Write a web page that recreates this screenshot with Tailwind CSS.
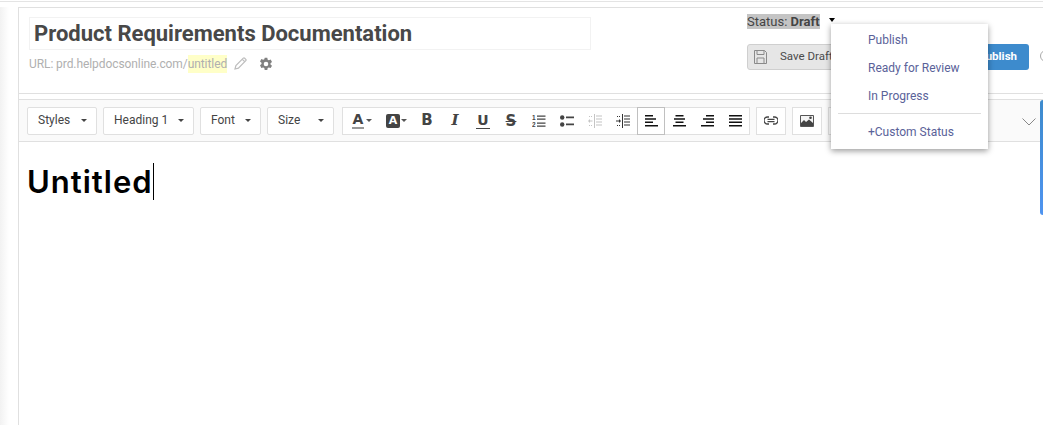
<!DOCTYPE html>
<html lang="en">
  <head>
    <meta charset="UTF-8" />
    <title>Product Requirements Documentation</title>
    <script src="https://cdn.jsdelivr.net/npm/@tailwindcss/browser@4"></script>
  </head>
  <body class="bg-white font-['Roboto',sans-serif] overflow-hidden">
    <div class="relative w-[1043px] h-[425px] overflow-hidden pt-px">
      <div class="h-[6px] border-t border-[#e4e4e4]"></div>
      <div class="flex">
        <div class="w-[18px] h-[418px] bg-gradient-to-r from-[#f2f2f2] via-white to-white"></div>
        <div class="flex-1 border-l border-[#e0e0e0] min-w-0">
          <!-- Title area -->
          <div class="h-[87px] border-y border-[#e0e0e0] flex">
            <div class="w-[727px] pl-[10px] pt-[9px] shrink-0">
              <div class="w-[562px] h-[33px] border border-[#f2f2f2] pl-[4px] flex items-center text-[22px] font-bold text-[#484848]">Product Requirements Documentation</div>
              <div class="flex items-center h-[14px] mt-[7px] text-[12px] tracking-[-0.08px] text-[#b0b0b0]">
                <span>URL:&nbsp;prd.helpdocsonline.com/</span><span class="bg-[#ffffc8]">untitled</span>
                <svg class="ml-[7px] -mt-[2px]" width="13" height="13" viewBox="0 0 13 13" fill="none" stroke="#bdbdbd" stroke-width="1.200"><path d="M1 12l.9-3.400L9.300 1.200a1 1 0 0 1 1.400 0l1.100 1.100a1 1 0 0 1 0 1.400L4.400 11.100z" /><path d="M8.300 2.300l2.400 2.400" /></svg>
                <svg class="ml-[12px]" width="14" height="14" viewBox="0 0 14 14" fill="#808080"><path fill-rule="evenodd" d="M5.700 0h2.600l.4 2 1.100.6 1.900-.7 1.300 2.300-1.500 1.300v1.300l1.500 1.300-1.300 2.300-1.900-.7-1.100.6-.4 2H5.700l-.4-2-1.100-.6-1.900.7L1 7.600 2.500 6.300V5L1 3.700l1.300-2.300 1.900.7 1.100-.6zM7 4a2.300 2.300 0 1 0 0 4.600A2.300 2.300 0 0 0 7 4z" transform="translate(0 .7)" /></svg>
              </div>
            </div>
            <div class="pl-[1px] pt-[5px] w-[283px] shrink-0">
              <div class="flex items-center h-[16px] text-[13px] text-[#444]">
                <span class="bg-[#c4c4c4] leading-[15px]">Status: <b class="font-bold">Draft</b></span>
                <span class="ml-[9px] -mt-[3px] w-0 h-0 border-x-[3.500px] border-x-transparent border-t-[4px] border-t-black"></span>
              </div>
              <div class="flex justify-between mt-[15px]">
                <div class="w-[110px] h-[26px] bg-[#e6e6e6] border border-[#cfcfcf] rounded-[3px] flex items-center pl-[6px] text-[11.500px] text-[#4a4a4a]">
                  <svg width="13" height="14" viewBox="0 0 13 14" fill="none" stroke="#8a8a8a"><path d="M.5.500h10l2 2v11H.5z" /><path d="M3 .500v4h7v-4M3 13.500V8h7v5.500" /></svg>
                  <span class="ml-[13px]">Save Draft</span>
                </div>
                <div class="w-[76px] h-[26px] bg-[#3d8bcd] rounded-[3px] flex items-center justify-end pr-[12px] text-[11.500px] font-bold text-white">Publish</div>
              </div>
            </div>
            <div class="ml-[11px] mt-[42px] w-[12px] h-[12px] rounded-full border border-[#aaa] shrink-0"></div>
          </div>
          <!-- Toolbar -->
          <div class="mt-[5px] h-[43px] border-y border-[#e0e0e0] bg-[#fafafa] flex items-center pl-[8px] gap-[6px] text-[12px] text-[#444]">
            <div class="w-[70px] h-[28px] border border-[#e0e0e0] bg-white rounded-[2px] flex items-center justify-between pl-[10px] pr-[9px] pb-px">Styles<span class="w-0 h-0 border-x-[3px] border-x-transparent border-t-[3px] border-t-[#444]"></span></div>
            <div class="w-[91px] h-[28px] border border-[#e0e0e0] bg-white rounded-[2px] flex items-center justify-between pl-[10px] pr-[9px] pb-px">Heading 1<span class="w-0 h-0 border-x-[3px] border-x-transparent border-t-[3px] border-t-[#444]"></span></div>
            <div class="w-[61px] h-[28px] border border-[#e0e0e0] bg-white rounded-[2px] flex items-center justify-between pl-[10px] pr-[9px] pb-px">Font<span class="w-0 h-0 border-x-[3px] border-x-transparent border-t-[3px] border-t-[#444]"></span></div>
            <div class="w-[67px] h-[28px] border border-[#e0e0e0] bg-white rounded-[2px] flex items-center justify-between pl-[10px] pr-[9px] pb-px">Size<span class="w-0 h-0 border-x-[3px] border-x-transparent border-t-[3px] border-t-[#444]"></span></div>
            <!-- format group -->
            <div class="ml-[2px] w-[408px] h-[28px] border border-[#e0e0e0] bg-white flex items-center font-['DejaVu_Sans',sans-serif] text-[#444]">
              <div class="w-[34px] flex items-center justify-center gap-[2px] pl-[4px]">
                <span class="text-[14px] font-bold leading-[15px] border-b-[2px] border-[#999] px-[1px]">A</span>
                <span class="w-0 h-0 border-x-[3px] border-x-transparent border-t-[3px] border-t-[#555]"></span>
              </div>
              <div class="w-[36px] flex items-center justify-center gap-[1px] pl-[3px]">
                <span class="w-[14px] h-[14px] rounded-[2px] bg-[#444] text-white text-[11px] font-bold leading-[14px] text-center">A</span>
                <span class="w-0 h-0 border-x-[3px] border-x-transparent border-t-[3px] border-t-[#555]"></span>
              </div>
              <div class="w-[28px] text-center text-[15px] font-bold">B</div>
              <div class="w-[28px] text-center text-[15px] font-bold italic font-['DejaVu_Serif',serif]">I</div>
              <div class="w-[28px] flex justify-center"><span class="text-[14px] font-bold leading-[15px] border-b border-[#444] px-px">U</span></div>
              <div class="w-[28px] text-center text-[15px] font-bold line-through pt-px">S</div>
              <div class="w-[28px] flex justify-center">
                <svg width="14" height="14" viewBox="0 0 14 14" fill="#444"><text x="0" y="6" font-size="6.500" font-weight="bold" font-family="Liberation Sans">1</text><text x="0" y="13" font-size="6.500" font-weight="bold" font-family="Liberation Sans">2</text><path d="M5 1.500h8.500v1.200H5zM5 4.500h8.500v1.200H5zM5 8.500h8.500v1.200H5zM5 11.500h8.500v1.200H5z" /></svg>
              </div>
              <div class="w-[28px] flex justify-center">
                <svg width="14" height="12" viewBox="0 0 14 12" fill="#444"><circle cx="2.200" cy="2.500" r="2.200" /><circle cx="2.200" cy="9.500" r="2.200" /><path d="M6 1.500h8v1.700H6zM6 8.500h8v1.700H6z" /></svg>
              </div>
              <div class="w-[28px] flex justify-center">
                <svg width="14" height="14" viewBox="0 0 14 14" fill="#c4c4c4"><path d="M6 0h1v14H6zM8 1.500h6v1H8zM8 4.500h6v1H8zM8 7.500h6v1H8zM8 10.500h6v1H8zM1.500 6.500h3v1h-3zM0 7l2-2v4zM1 2h1v1H1zM3 2h1v1H3zM1 11h1v1H1zM3 11h1v1H3z" /></svg>
              </div>
              <div class="w-[28px] flex justify-center">
                <svg width="14" height="14" viewBox="0 0 14 14" fill="#333"><path d="M6 0h1v14H6zM8 1.500h6v1H8zM8 4.500h6v1H8zM8 7.500h6v1H8zM8 10.500h6v1H8zM0 6.500h3v1H0zM5 7L3 5v4zM1 2h1v1H1zM3 2h1v1H3zM1 11h1v1H1zM3 11h1v1H3z" /></svg>
              </div>
              <div class="w-[28px] h-[28px] border border-[#c0c0c0] flex items-center justify-center">
                <svg width="13" height="12" viewBox="0 0 13 12" fill="#111"><path d="M0 0h8v1.500H0zM0 3.300h11v1.500H0zM0 6.600h8v1.500H0zM0 10h13v1.500H0z" /></svg>
              </div>
              <div class="w-[28px] flex justify-center">
                <svg width="13" height="12" viewBox="0 0 13 12" fill="#111"><path d="M2.500 0h8v1.500h-8zM1 3.300h11v1.500H1zM2.500 6.600h8v1.500h-8zM0 10h13v1.500H0z" /></svg>
              </div>
              <div class="w-[28px] flex justify-center">
                <svg width="13" height="12" viewBox="0 0 13 12" fill="#111"><path d="M5 0h8v1.500H5zM2 3.300h11v1.500H2zM5 6.600h8v1.500H5zM0 10h13v1.500H0z" /></svg>
              </div>
              <div class="w-[28px] flex justify-center">
                <svg width="13" height="12" viewBox="0 0 13 12" fill="#111"><path d="M0 0h13v1.500H0zM0 3.300h13v1.500H0zM0 6.600h13v1.500H0zM0 10h13v1.500H0z" /></svg>
              </div>
            </div>
            <div class="w-[30px] h-[28px] border border-[#e0e0e0] bg-white flex items-center justify-center">
              <svg width="14" height="9" viewBox="0 0 14 9" fill="none" stroke="#444" stroke-width="1.300"><path d="M5 1H3.500a3.500 3.500 0 0 0 0 7H5M9 1h1.500a3.500 3.500 0 0 1 0 7H9" /><path d="M3.500 3.400h7M3.500 5.600h7" /></svg>
            </div>
            <div class="w-[30px] h-[28px] border border-[#e0e0e0] bg-white flex items-center justify-center">
              <svg width="14" height="12" viewBox="0 0 14 12"><path fill="#f4f4f4" stroke="#555" d="M.5.500h13v11H.5z" /><path fill="#444" d="M1 11V8l3-3 2 2 3-2.500L13 8v3z" /><circle cx="10.500" cy="2.800" r="1.300" fill="#444" /></svg>
            </div>
            <div class="w-[30px] h-[28px] border border-[#e0e0e0] bg-white"></div>
            <svg class="ml-[158px] mt-[3px]" width="14" height="8" viewBox="0 0 14 8" fill="none" stroke="#888"><path d="M.5.500l6.500 6.500 6.500-6.500" /></svg>
          </div>
          <!-- Editor -->
          <div class="pl-[8px] pt-[21px] flex items-start">
            <span class="font-['Inter',sans-serif] font-semibold text-[31px] tracking-[1px] leading-[38px] text-black">Untitled</span>
            <span class="w-px h-[37px] bg-black"></span>
          </div>
        </div>
      </div>

      <!-- Status menu -->
      <div class="absolute left-[831px] top-[24px] w-[157px] h-[125px] bg-white shadow-[0_2px_6px_rgba(0,0,0,0.4)] text-[12px] text-[#5a6299] pl-[37px] pt-[2px]">
        <div class="h-[28px] leading-[28px]">Publish</div>
        <div class="h-[28px] leading-[28px]">Ready for Review</div>
        <div class="h-[28px] leading-[28px]">In Progress</div>
        <div class="-ml-[30px] mr-[7px] mt-[3px] border-t border-[#ddd]"></div>
        <div class="mt-[4px] h-[28px] leading-[28px]">+Custom Status</div>
      </div>

      <!-- Side tab -->
      <div class="absolute right-0 top-[100px] w-[3px] h-[115px] rounded-l-[4px] bg-gradient-to-b from-[#3d8bcd] to-[#4f94f0]"></div>
    </div>
  </body>
</html>
